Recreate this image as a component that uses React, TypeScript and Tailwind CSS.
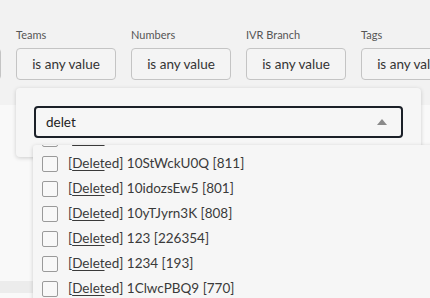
import React from "react";

const filters = ["Teams", "Numbers", "IVR Branch", "Tags"];

const options = [
  { name: "0xABCDEF", id: "812" },
  { name: "10StWckU0Q", id: "811" },
  { name: "10idozsEw5", id: "801" },
  { name: "10yTJyrn3K", id: "808" },
  { name: "123", id: "226354" },
  { name: "1234", id: "193" },
  { name: "1ClwcPBQ9", id: "770" },
];

function App() {
  return (
    <div
      className="relative w-[430px] h-[298px] overflow-hidden bg-[#f9f9f9] text-[#333]"
      style={{ fontFamily: "Lato, 'Open Sans', sans-serif" }}
    >
      {/* Filter bar */}
      <div className="h-[105px] bg-[#f2f2f2] pt-[27px]">
        <div className="flex gap-[15px] -ml-[99px]">
          {/* box cut off at the left edge */}
          <div className="flex flex-col shrink-0 w-[100px]">
            <div className="h-[21px]" />
            <div className="h-[32px] border border-[#c4c4c4] rounded-[4px] bg-[#f4f4f4]" />
          </div>
          {filters.map((f) => (
            <FilterBox key={f} label={f} />
          ))}
        </div>
      </div>

      {/* page content under the menu */}
      <div className="mt-[176px] h-[12px] bg-[#ececec]" />

      {/* Popover with search input */}
      <div className="absolute left-[16px] top-[88px] w-[405px] h-[69px] bg-[#f6f6f6] rounded-[4px] shadow-[0_1px_4px_rgba(0,0,0,0.18)] px-[18px] pt-[18px]">
        <div className="flex items-center justify-between h-[32px] border-2 border-[#1b2028] rounded-[4px] pl-[10px] pr-[14px]">
          <span className="text-[13.5px] text-[#222]">delet</span>
          <svg width="10" height="6" viewBox="0 0 10 6">
            <path d="M5 0 L10 6 L0 6 Z" fill="#8a8a8a" />
          </svg>
        </div>
      </div>

      {/* Options list */}
      <div className="absolute left-[33px] top-[145px] w-[420px] h-[160px] overflow-hidden bg-[#f6f6f6] rounded-[3px] shadow-[0_1px_4px_rgba(0,0,0,0.18)]">
        <div className="-mt-[19px] flex flex-col">
          {options.map((o) => (
            <div key={o.name} className="flex items-center h-[25px] pl-[9px] gap-[10px]">
              <div className="w-[16px] h-[16px] border border-[#9a9a9a] rounded-[2px] bg-[#f8f8f8]" />
              <span className="text-[13.5px] text-[#3a3a3a] whitespace-nowrap">
                [<span className="underline underline-offset-2">Delet</span>ed] {o.name} [{o.id}]
              </span>
            </div>
          ))}
        </div>
      </div>
    </div>
  );
}

function FilterBox({ label }: { label: string }) {
  return (
    <div className="flex flex-col shrink-0 w-[100px]">
      <span className="text-[11px] text-[#555] h-[21px] leading-[16px]">{label}</span>
      <div className="h-[32px] border border-[#c4c4c4] rounded-[4px] flex items-center justify-center text-[13.5px] text-[#333] whitespace-nowrap bg-[#f4f4f4]">
        is any value
      </div>
    </div>
  );
}

export default App;
